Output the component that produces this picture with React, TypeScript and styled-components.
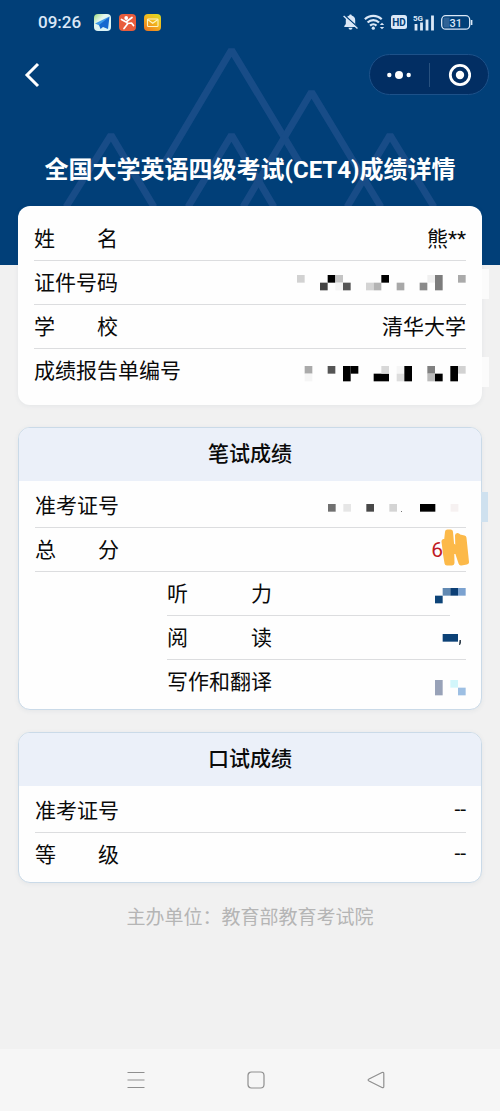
import React from "react";
import styled, { createGlobalStyle } from "styled-components";

const GlobalStyle = createGlobalStyle`
  * { box-sizing: border-box; }
  body {
    margin: 0;
    background: #f1f1f1;
    color: #0a0a0a;
    font-family: Roboto, "Noto Sans CJK SC", sans-serif;
    font-size: 21px;
  }
  button {
    display: flex;
    align-items: center;
    justify-content: center;
    padding: 0;
    border: 0;
    background: none;
    color: inherit;
    font: inherit;
    cursor: pointer;
  }
  svg { display: block; flex: none; }
`;

const Page = styled.div`
  display: flex;
  flex-direction: column;
  min-height: 100vh;
`;

const Hero = styled.header`
  position: relative;
  padding-bottom: 59px;
  overflow: hidden;
  background: #013f78;
  color: #fff;
`;

const Mountains = styled.svg`
  position: absolute;
  top: 40px;
  left: 50%;
  transform: translateX(-50%);
`;

const StatusBar = styled.div`
  position: relative;
  display: flex;
  align-items: center;
  justify-content: space-between;
  height: 44px;
  padding: 0 27px 0 38px;
  color: #dbe8f7;
`;

const StatusGroup = styled.div<{ $gap: number }>`
  display: flex;
  align-items: center;
  gap: ${(p) => p.$gap}px;
`;

const Clock = styled.time`
  margin-right: 5px;
  font-size: 17px;
  font-weight: 500;
`;

const NavRow = styled.div`
  position: relative;
  display: flex;
  align-items: center;
  justify-content: space-between;
  height: 61px;
  padding: 0 11px 0 16px;
`;

const BackButton = styled.button`
  width: 32px;
  height: 40px;
`;

const Capsule = styled.div`
  display: flex;
  align-items: center;
  width: 120px;
  height: 41px;
  border: 1px solid #1d5189;
  border-radius: 21px;
  background: #022e63;
`;

const CapsuleButton = styled.button`
  flex: 1;
  height: 100%;
`;

const CapsuleDivider = styled.span`
  width: 1px;
  height: 24px;
  background: #28517f;
`;

const Title = styled.h1`
  position: relative;
  margin: 0;
  padding: 48px 16px 18px;
  font-size: 24px;
  font-weight: 700;
  line-height: 35px;
  text-align: center;
`;

const Content = styled.main`
  display: flex;
  flex-direction: column;
  gap: 22px;
  margin-top: -59px;
  padding: 0 18px;
`;

const Card = styled.section`
  position: relative;
  padding: 11px 16px 12px;
  border-radius: 12px;
  background: #fefefe;
  box-shadow: 0 1px 5px rgba(60, 90, 120, 0.07);
`;

const ScoreCard = styled(Card)`
  padding: 0;
  border: 1px solid #cadae8;
`;

const CardHeading = styled.h2`
  margin: 0;
  border-radius: 11px 11px 0 0;
  background: #ebf0f9;
  font-size: 21px;
  font-weight: 500;
  line-height: 53px;
  text-align: center;
`;

const Rows = styled.dl`
  margin: 0;
`;

const ScoreRows = styled(Rows)`
  padding: 3px 15px 5px 16px;
`;

const SubRows = styled.div`
  margin-left: 132px;
`;

const Row = styled.div<{ $last?: boolean; $lineWidth?: string }>`
  position: relative;
  display: flex;
  align-items: center;
  justify-content: space-between;
  height: 44px;
  background: linear-gradient(#dcdddf, #dcdddf) left bottom / ${(p) => (p.$last ? "0" : p.$lineWidth ?? "100%")} 1px no-repeat;
`;

const Label = styled.dt`
  padding-bottom: 4px;
  white-space: pre;
`;

const Value = styled.dd`
  display: flex;
  align-items: center;
  margin: 0;
`;

const TextValue = styled(Value)`
  padding-bottom: 4px;
`;

const Score = styled.span`
  color: #bf1a25;
`;

const Scribble = styled.svg`
  margin: 0 -3px 4px -2px;
`;

const EdgeTab = styled.span<{ $color: string; $out: number; $width: number }>`
  position: absolute;
  top: 8px;
  right: -${(p) => p.$out}px;
  width: ${(p) => p.$width}px;
  height: 30px;
  background: ${(p) => p.$color};
`;

const Organizer = styled.p`
  margin: 21px 0 24px;
  color: #b5b5b5;
  font-size: 19px;
  line-height: 28px;
  text-align: center;
`;

const SystemNav = styled.nav`
  display: flex;
  justify-content: center;
  gap: 80px;
  height: 62px;
  margin-top: auto;
  padding-left: 11px;
  background: #f6f6f6;
`;

const SystemButton = styled.button`
  width: 40px;
  height: 62px;
`;

type Cell = [col: number, row: number, cols: number, rows: number, fill: string];

const UNIT = 23 / 3;

function Mosaic({ columns, top, cells, children }: { columns: number; top: number; cells: Cell[]; children?: React.ReactNode }) {
  return (
    <svg width={Math.round(columns * UNIT)} height="36" aria-hidden="true">
      {cells.map(([c, r, w, h, fill]) => (
        <rect key={`${c}-${r}`} x={c * UNIT} y={top + r * UNIT} width={w * UNIT} height={h * UNIT} fill={fill} />
      ))}
      {children}
    </svg>
  );
}

const idCells: Cell[] = [
  [0, 0, 1, 1, "#d2d2d2"], [3, 1, 1, 1, "#444"], [4, 0, 1, 1, "#000"], [5, 0, 1, 1, "#c4c4c4"],
  [5, 1, 1, 1, "#f4f4f4"], [6, 1, 1, 1, "#555"], [9, 1, 1, 1, "#d4d4d4"], [10, 1, 1, 1, "#b4b4b4"],
  [11, 0, 1, 1, "#000"], [13, 1, 1, 1, "#a8a8a8"], [16, 1, 1, 1, "#8a8a8a"], [17, 0, 1, 1, "#f0f0f0"],
  [18, 0, 1, 2, "#7c7c7c"], [21, 0, 1, 1, "#aaa"],
];

const reportCells: Cell[] = [
  [1, 0, 1, 1, "#aaa"], [1, 1, 1, 1, "#f5f5f5"], [4, 0, 1, 1, "#555"], [6, 0, 1, 2, "#000"],
  [7, 0, 1, 1, "#000"], [10, 1, 2, 1, "#000"], [11, 0, 1, 1, "#d8d8d8"], [13, 0, 1, 1, "#f6f6f6"],
  [13, 1, 1, 1, "#ddd"], [14, 0, 1, 2, "#000"], [17, 0, 1, 1, "#808080"], [17, 1, 1, 1, "#bbb"],
  [18, 1, 1, 1, "#000"], [20, 0, 1, 2, "#000"], [21, 0, 1, 1, "#d2d2d2"],
];

const admissionCells: Cell[] = [
  [0, 0, 1, 1, "#707070"], [2, 0, 1, 1, "#e6e6e6"], [5, 0, 1, 1, "#484848"], [8, 0, 1, 1, "#d4d4d4"],
  [12, 0, 2, 1, "#000"], [16, 0, 1, 1, "#f6f1f1"],
];

const listeningCells: Cell[] = [
  [0, 1, 1, 1, "#0d4478"], [1, 0, 1, 1, "#6189b2"], [2, 0, 1, 1, "#0c3f75"], [3, 0, 1, 1, "#7ba2d0"],
];

const readingCells: Cell[] = [[1, 0, 2, 1, "#0c4176"]];

const writingCells: Cell[] = [[0, 0, 1, 2, "#98a2b8"], [2, 0, 1, 1, "#d2f6fb"], [3, 1, 1, 1, "#9dbfe3"]];

function PlaneApp() {
  return (
    <svg width="17" height="17" viewBox="0 0 17 17" aria-hidden="true">
      <defs>
        <linearGradient id="planeBg" x1="0" y1="0" x2="1" y2="1">
          <stop offset="0" stopColor="#9fdc7c" />
          <stop offset="0.35" stopColor="#e4f6ee" />
          <stop offset="1" stopColor="#d5f1fb" />
        </linearGradient>
      </defs>
      <rect width="17" height="17" rx="4" fill="url(#planeBg)" />
      <path d="M15.5 2.5 1 9.5 5.5 11.500z" fill="#3d9bea" />
      <path d="M15.5 2.5 5 11 6.500 15 9 13 14 15z" fill="#1668cf" />
    </svg>
  );
}

function RunnerApp() {
  return (
    <svg width="17" height="17" viewBox="0 0 17 17" aria-hidden="true">
      <rect width="17" height="17" rx="4" fill="#e85c3c" />
      <circle cx="7.2" cy="4" r="1.9" fill="#fff" />
      <path d="M2.5 5.5 7 8 13 3.5M7.5 7.5 8.5 10 5 14.5M8.5 9.5 12.5 9 14.5 11.5" fill="none" stroke="#fff" strokeWidth="1.7" strokeLinecap="round" strokeLinejoin="round" />
    </svg>
  );
}

function MailApp() {
  return (
    <svg width="17" height="17" viewBox="0 0 17 17" aria-hidden="true">
      <defs>
        <linearGradient id="mailBg" x1="1" y1="0" x2="0.3" y2="1">
          <stop offset="0" stopColor="#d9dd25" />
          <stop offset="0.5" stopColor="#f2b91f" />
          <stop offset="1" stopColor="#ee7f1e" />
        </linearGradient>
      </defs>
      <rect width="17" height="17" rx="4" fill="url(#mailBg)" />
      <rect x="3.5" y="5" width="10.5" height="7.5" rx="0.8" fill="none" stroke="#fdf3c4" strokeWidth="1.1" />
      <path d="M4 5.8 8.7 9.2 13.5 5.8" fill="none" stroke="#fdf3c4" strokeWidth="1.1" />
    </svg>
  );
}

function MutedBell() {
  return (
    <svg width="15" height="16" viewBox="0 0 15 16" aria-hidden="true">
      <path d="M7.5 0.5c.8 0 1.2.5 1.2 1.1 2.3.6 3.5 2.4 3.5 4.7v3.7l1.5 2v1H1.3v-1l1.5-2V6.3c0-2.3 1.2-4.1 3.5-4.7 0-.6.4-1.1 1.2-1.1z" fill="currentColor" />
      <path d="M5.500 13.800h4a2 2 0 0 1-4 0z" fill="currentColor" />
      <path d="M1.200 1.200 15 13.500" stroke="#013f78" strokeWidth="1.600" />
      <path d="M.6 2 14.500 14.500" stroke="currentColor" strokeWidth="1.400" />
    </svg>
  );
}

function Wifi() {
  return (
    <svg width="21" height="16" viewBox="0 0 21 16" aria-hidden="true">
      <g fill="none" stroke="currentColor" strokeWidth="2.200">
        <path d="M.9 5.300a12 12 0 0 1 16.800 0" />
        <path d="M3.600 8.600a8 8 0 0 1 11.400 0" />
        <path d="M6.100 11.600a4.600 4.600 0 0 1 6.400 0" />
      </g>
      <circle cx="9.300" cy="14.200" r="1.600" fill="currentColor" />
      <path d="M18 8.700 20.200 11h-4.400zM18 15.300 15.800 13h4.400z" fill="currentColor" />
    </svg>
  );
}

function HdBadge() {
  return (
    <svg width="16" height="14" viewBox="0 0 16 14" aria-hidden="true">
      <rect width="16" height="14" rx="2.500" fill="currentColor" />
      <text x="8" y="11" textAnchor="middle" fontFamily="Roboto, sans-serif" fontSize="10" fontWeight="700" fill="#013f78">HD</text>
    </svg>
  );
}

function Signal() {
  return (
    <svg width="22" height="17" viewBox="0 0 22 17" aria-hidden="true">
      <text x="0" y="7" fontFamily="Roboto, sans-serif" fontSize="8" fontWeight="700" fill="currentColor">5G</text>
      <path d="M3 10v6.500M8.500 8.500v8M14 5.500v11M19.500 1.500v15" stroke="currentColor" strokeWidth="2.800" />
    </svg>
  );
}

function Battery() {
  return (
    <svg width="32" height="15" viewBox="0 0 32 15" aria-hidden="true">
      <rect x="0.700" y="0.700" width="28" height="13.500" rx="4" fill="none" stroke="currentColor" strokeWidth="1.300" />
      <path d="M2.500 3.500q0-1 1-1h5v10h-5q-1 0-1-1z" fill="#2f6296" />
      <path d="M30.600 5v5" stroke="currentColor" strokeWidth="1.600" />
      <text x="14.700" y="11.500" textAnchor="middle" fontFamily="Roboto, sans-serif" fontSize="11" fontWeight="500" fill="currentColor">31</text>
    </svg>
  );
}

export default function App() {
  return (
    <Page>
      <GlobalStyle />
      <Hero>
        <Mountains width="500" height="170" viewBox="0 40 500 170" aria-hidden="true">
          <g fill="none" stroke="#184c87" strokeWidth="7" strokeLinejoin="bevel">
            <path d="M165 162 231.500 50 299 162" />
            <path d="M243 207 311.500 92 381 207" />
            <path d="M66 207 111 135 154 207" />
            <path d="M188 207 231.500 135 274 207" />
            <path d="M347 207 390 135 434 207" />
          </g>
        </Mountains>
        <StatusBar>
          <StatusGroup $gap={8}>
            <Clock>09:26</Clock>
            <PlaneApp />
            <RunnerApp />
            <MailApp />
          </StatusGroup>
          <StatusGroup $gap={6}>
            <MutedBell />
            <Wifi />
            <HdBadge />
            <Signal />
            <Battery />
          </StatusGroup>
        </StatusBar>
        <NavRow>
          <BackButton type="button" aria-label="返回">
            <svg width="16" height="26" viewBox="0 0 16 26" aria-hidden="true">
              <path d="M14 2 3 13 14 24" fill="none" stroke="#fff" strokeWidth="3" />
            </svg>
          </BackButton>
          <Capsule>
            <CapsuleButton type="button" aria-label="更多">
              <svg width="26" height="10" viewBox="0 0 26 10" aria-hidden="true" fill="#fff">
                <circle cx="3.300" cy="5" r="2.200" />
                <circle cx="13" cy="5" r="4" />
                <circle cx="22.700" cy="5" r="2.200" />
              </svg>
            </CapsuleButton>
            <CapsuleDivider />
            <CapsuleButton type="button" aria-label="关闭">
              <svg width="24" height="24" viewBox="0 0 24 24" aria-hidden="true">
                <circle cx="13" cy="12" r="9.700" fill="none" stroke="#fff" strokeWidth="2.800" />
                <circle cx="13" cy="12" r="4.200" fill="#fff" />
              </svg>
            </CapsuleButton>
          </Capsule>
        </NavRow>
        <Title>全国大学英语四级考试(CET4)成绩详情</Title>
      </Hero>

      <Content>
        <Card>
          <Rows>
            <Row>
              <Label>姓　　名</Label>
              <TextValue>熊**</TextValue>
            </Row>
            <Row>
              <EdgeTab $color="#fbfbfb" $out={23} $width={7} />
              <Label>证件号码</Label>
              <Value><Mosaic columns={22} top={10} cells={idCells} /></Value>
            </Row>
            <Row>
              <Label>学　　校</Label>
              <TextValue>清华大学</TextValue>
            </Row>
            <Row $last>
              <EdgeTab $color="#fbfbfb" $out={23} $width={7} />
              <Label>成绩报告单编号</Label>
              <Value><Mosaic columns={22} top={13} cells={reportCells} /></Value>
            </Row>
          </Rows>
        </Card>

        <ScoreCard>
          <CardHeading>笔试成绩</CardHeading>
          <ScoreRows>
            <Row>
              <EdgeTab $color="#cfe1ef" $out={22} $width={7} />
              <Label>准考证号</Label>
              <Value>
                <Mosaic columns={18} top={16} cells={admissionCells}>
                  <rect x="73" y="23" width="1" height="1" fill="#777" />
                </Mosaic>
              </Value>
            </Row>
            <Row>
              <Label>总　　分</Label>
              <Value>
                <Score>6</Score>
                <Scribble width="28" height="38" viewBox="0 0 28 38" aria-hidden="true">
                  <path d="M3 12.500 5.500 12 6.500 3 9.500 3 10.500 14 11 34 6 34 4.500 25zM16.500 6.500 18.500 8 23 9 25.500 33 20 34 17 25z" fill="#fcb949" stroke="#fcb949" strokeWidth="5" strokeLinejoin="round" />
                  <path d="M12 14 15 16V25H12z" fill="#fcb949" />
                </Scribble>
              </Value>
            </Row>
            <SubRows>
              <Row $lineWidth="calc(100% - 16px)">
                <Label>听　　　力</Label>
                <Value><Mosaic columns={4} top={12} cells={listeningCells} /></Value>
              </Row>
              <Row>
                <Label>阅　　　读</Label>
                <Value>
                  <Mosaic columns={4} top={14} cells={readingCells}>
                    <path d="M24.500 20h1.500v3l-1 2h-1z" fill="#33424f" />
                  </Mosaic>
                </Value>
              </Row>
              <Row $last>
                <Label>写作和翻译</Label>
                <Value><Mosaic columns={4} top={16} cells={writingCells} /></Value>
              </Row>
            </SubRows>
          </ScoreRows>
        </ScoreCard>

        <ScoreCard>
          <CardHeading>口试成绩</CardHeading>
          <ScoreRows>
            <Row>
              <Label>准考证号</Label>
              <TextValue>--</TextValue>
            </Row>
            <Row $last>
              <Label>等　　级</Label>
              <TextValue>--</TextValue>
            </Row>
          </ScoreRows>
        </ScoreCard>
      </Content>

      <Organizer>主办单位：教育部教育考试院</Organizer>

      <SystemNav>
        <SystemButton type="button" aria-label="最近任务">
          <svg width="18" height="18" viewBox="0 0 18 18" aria-hidden="true">
            <path d="M.5 1.500h17M.5 9h17M.5 16.500h17" stroke="#8f8f8f" strokeWidth="1.200" />
          </svg>
        </SystemButton>
        <SystemButton type="button" aria-label="主屏幕">
          <svg width="18" height="18" viewBox="0 0 18 18" aria-hidden="true">
            <rect x="1" y="1" width="16" height="16" rx="3.500" fill="none" stroke="#8f8f8f" strokeWidth="1.200" />
          </svg>
        </SystemButton>
        <SystemButton type="button" aria-label="返回上一页">
          <svg width="18" height="18" viewBox="0 0 18 18" aria-hidden="true">
            <path d="M15 1.500Q16.800.8 16.800 2.500V15.500Q16.800 17.200 15 16.500L2 10Q.2 9 2 8z" fill="none" stroke="#8f8f8f" strokeWidth="1.200" />
          </svg>
        </SystemButton>
      </SystemNav>
    </Page>
  );
}
